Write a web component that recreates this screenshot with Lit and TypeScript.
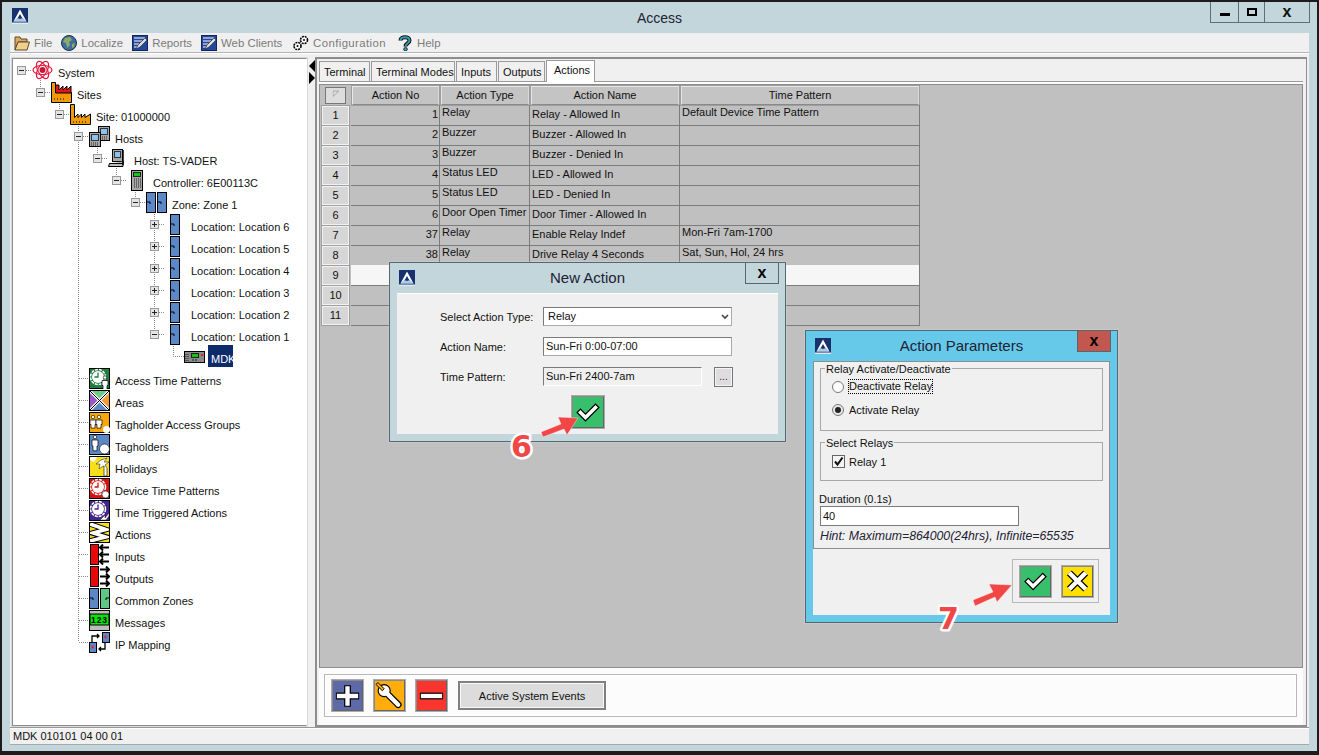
import { LitElement, html, css, svg } from "lit";
import { customElement } from "lit/decorators.js";

const logo = (s = 16) => html`<svg class="logo" width=${s} height=${s} viewBox="0 0 16 16"><rect width="16" height="16" fill="#17306e"/><path d="M8 1.500 14.500 13.500H1.500Z" fill="#fff"/><path d="M8 6 10.800 11H5.200Z" fill="#17306e"/><path d="M1.500 13.500 5.600 9.500 8 11 10.400 9.500 14.500 13.500H1.500Z" fill="#8fb6dc" opacity=".75"/><rect y="14.500" width="16" height="1.500" fill="#dfe8f4"/></svg>`;

const door = (x: number, w: number, fill: string, side: "l" | "r" = "l") => svg`<rect x=${x + .5} y=".5" width=${w} height="20" fill=${fill} stroke="#000"/><path d=${side === "l" ? `M${x + 1} 10h3v2` : `M${x + w} 10h-3v2`} fill="none" stroke="#000"/>`;
const computer = (x: number, y: number) => svg`<rect x=${x + .5} y=${y + .5} width="11" height="14" fill="#a8a8a8" stroke="#000"/><rect x=${x + 2.5} y=${y + 2.5} width="7" height="6" fill="#8ec1f0" stroke="#333"/><path d=${`M${x + 2} ${y + 11}h8M${x + 2} ${y + 13}h8`} stroke="#222" stroke-dasharray="1 1"/>`;
const clock = (bg: string, hand: string, extra: unknown = "") => svg`<rect x=".5" y=".5" width="20" height="20" fill=${bg} stroke="#000"/><circle cx="9" cy="9" r="7.500" fill="none" stroke="#fff" stroke-width="1.500" stroke-dasharray="3 1"/><circle cx="9" cy="9" r="6" fill="#fff"/><path d="M9 4.500V9H5.500" fill="none" stroke=${hand} stroke-width="1.300"/>${extra}`;
const person = (x: number, y: number, h = 1) => svg`<circle cx=${x} cy=${y} r="1.700" fill="#fff" stroke="#000" stroke-width=".6"/><path d=${`M${x - 3} ${y + 3}h6v${5 * h}h-1v${4 * h}h-4v${-4 * h}h-1Z`} fill="#fff" stroke="#000" stroke-width=".7"/>`;
const arrows = (dir: "l" | "r") => [3.5, 10.5, 17.5].map(y => dir === "l"
  ? svg`<path d=${`M11 ${y}h9M14 ${y - 3}l-3 3 3 3`} fill="none" stroke="#000" stroke-width="2"/>`
  : svg`<path d=${`M11 ${y}h9M17 ${y - 3}l3 3-3 3`} fill="none" stroke="#000" stroke-width="2"/>`);

const icons: Record<string, unknown> = {
  system: svg`<g fill="none" stroke="#e4173a" stroke-width="1.200"><ellipse cx="10.500" cy="10" rx="9.500" ry="4.500"/><ellipse cx="10.500" cy="10" rx="9.500" ry="4.500" transform="rotate(60 10.500 10)"/><ellipse cx="10.500" cy="10" rx="9.500" ry="4.500" transform="rotate(-60 10.500 10)"/></g><circle cx="10.500" cy="10" r="3" fill="#c4163c"/>`,
  sites: svg`<path d="M.5 20.500V.5H4.500V10.500H20.500V20.500Z" fill="#f09a0a" stroke="#000"/><path d="M4.500 3 4.500 11 20 11 20 4 16 8V4L12 8V4L8 8V3Z" fill="#e8141c" stroke="#000"/><path d="M3 17h11" stroke="#000" stroke-dasharray="1 2"/>`,
  site: svg`<path d="M.5 20.500V.5H4.500V13.500L8 10V13.500L11.500 10V13.500L15 10V13.500L20.500 10V20.500Z" fill="#f09a0a" stroke="#000"/><path d="M3 18h15" stroke="#000" stroke-dasharray="1 2"/>`,
  hosts: svg`${computer(9, 0)}${computer(0, 6)}`,
  host: svg`<rect x="4.500" y="1.500" width="10" height="12" fill="#a8a8a8" stroke="#000"/><rect x="6.500" y="3.500" width="6" height="6" fill="#8ec1f0" stroke="#333"/><path d="M1.500 15.500H15V13.500M.5 18.500H15V15.500H1.500Z" fill="#bbb" stroke="#000"/><path d="M15 2V17" stroke="#000" stroke-width="1.500"/>`,
  controller: svg`<rect x="4.500" y=".5" width="11" height="20" fill="#a8a8a8" stroke="#000"/><rect x="6.500" y="2.500" width="7" height="4" fill="#0ec80e" stroke="#222"/><path d="M7 9h7M7 11h7M7 13h7M7 15h7M7 17h7" stroke="#222" stroke-dasharray="1 1"/>`,
  zone: svg`${door(0, 9, "#5c88c8")}${door(11, 9, "#5c88c8")}`,
  location: svg`${door(5, 9, "#5c88c8")}`,
  mdk: svg`<rect x=".5" y="5.500" width="20" height="11" fill="#8a8a8a" stroke="#000"/><rect x="7.500" y="7.500" width="7" height="4" fill="#0ec80e" stroke="#222"/><path d="M2 8v7M4 8v7" stroke="#222" stroke-dasharray="1 1"/><path d="M8 14h6" stroke="#222" stroke-dasharray="2 1"/><rect x="17" y="8" width="2" height="2" fill="#e21c1c"/>`,
  atp: clock("#1f7d3e", "#1f7d3e", person(16, 9.5)),
  areas: svg`<rect x=".5" y=".5" width="20" height="20" fill="#fff" stroke="#000"/><path d="M3 1H18L10.500 8.500Z" fill="#6bcb88"/><path d="M1 3V18L8.500 10.500Z" fill="#9a5cc4"/><path d="M20 3V18L12.500 10.500Z" fill="#f29a3c"/><path d="M3 20H18L10.500 12.500Z" fill="#5c88c8"/><path d="M1 1 20 20M20 1 1 20" stroke="#000"/>`,
  groups: svg`<rect x=".5" y=".5" width="20" height="20" fill="#f7a70a" stroke="#000"/>${person(4, 5, .9)}${person(10, 5, .9)}<circle cx="17.500" cy="17.500" r="3.500" fill="#fff"/>`,
  holders: svg`<rect x=".5" y=".5" width="20" height="20" fill="#5c88c8" stroke="#000"/>${person(6, 3, 1.200)}<circle cx="15.500" cy="15" r="5" fill="#fff" stroke="#000" stroke-width=".6"/>`,
  holidays: svg`<rect x=".5" y=".5" width="20" height="20" fill="#f7e01a" stroke="#000"/><path d="M1 1H8L5 6 1 4Z" fill="#fff"/><path d="M12 4 18 2 15 6 20 6 16 9 18 12 14 10 10 13 11 8 7 8Z" fill="#fff" stroke="#333" stroke-width=".6"/><path d="M15 10v10h3V12" fill="#fff" stroke="#000" stroke-width=".6"/>`,
  device: clock("#d11414", "#d11414", svg`<circle cx="16.500" cy="16.500" r="3.500" fill="#fff" stroke="#000" stroke-width=".5"/>`),
  tta: clock("#43238c", "#43238c", svg`<path d="M11 20 16 15V18L20 13V16L17 20H11Z" fill="#fff" stroke="#000" stroke-width=".4"/>`),
  actions: svg`<rect x=".5" y=".5" width="20" height="20" fill="#f7e01a" stroke="#000"/><path d="M1 2 17 7.500 4 11 17 15 1 19" fill="none" stroke="#000" stroke-width="5.500"/><path d="M1 2 17 7.500 4 11 17 15 1 19" fill="none" stroke="#fff" stroke-width="3.500"/><rect x=".5" y=".5" width="20" height="20" fill="none" stroke="#000"/>`,
  inputs: svg`<rect x="1.500" y=".5" width="8" height="20" fill="#e80808" stroke="#000"/>${arrows("l")}`,
  outputs: svg`<rect x="1.500" y=".5" width="8" height="20" fill="#e80808" stroke="#000"/>${arrows("r")}`,
  common: svg`${door(0, 9, "#5c88c8")}${door(11, 9, "#5ec884", "r")}`,
  messages: svg`<rect x=".5" y=".5" width="20" height="20" fill="#bcbcbc" stroke="#000"/><rect x="1" y="4" width="19" height="11" fill="#0ee00e" stroke="#000"/><text x="10.500" y="12.800" text-anchor="middle" font-family="Liberation Sans, sans-serif" font-weight="700" font-size="8.500" letter-spacing="1">123</text>`,
  ipmap: svg`<rect x=".5" y="10.500" width="7" height="10" fill="#5c88c8" stroke="#000"/><rect x="2.500" y="13.500" width="2" height="3" fill="#e22"/><rect x="13.500" y=".5" width="7" height="10" fill="#5c88c8" stroke="#000"/><rect x="15.500" y="3.500" width="2" height="3" fill="#e22"/><path d="M3 10V4H10M8 2l2 2-2 2M16 11v6H10M12 15l-2 2 2 2" fill="none" stroke="#000" stroke-width="1.300"/>`,
};
const treeIcon = (n: string) => html`<svg class="ti" width="21" height="21" viewBox="0 0 21 21">${icons[n]}</svg>`;

type Node = { label: string; icon: string; level: number; toggle?: "-" | "+" | "" };
const tree: Node[] = [
  { label: "System", icon: "system", level: 0, toggle: "-" },
  { label: "Sites", icon: "sites", level: 1, toggle: "-" },
  { label: "Site: 01000000", icon: "site", level: 2, toggle: "-" },
  { label: "Hosts", icon: "hosts", level: 3, toggle: "-" },
  { label: "Host: TS-VADER", icon: "host", level: 4, toggle: "-" },
  { label: "Controller: 6E00113C", icon: "controller", level: 5, toggle: "-" },
  { label: "Zone: Zone 1", icon: "zone", level: 6, toggle: "-" },
  ...[6, 5, 4, 3, 2].map(n => ({ label: `Location: Location ${n}`, icon: "location", level: 7, toggle: "+" as const })),
  { label: "Location: Location 1", icon: "location", level: 7, toggle: "-" },
  { label: "MDK", icon: "mdk", level: 8, toggle: "" },
  ...([["Access Time Patterns", "atp"], ["Areas", "areas"], ["Tagholder Access Groups", "groups"], ["Tagholders", "holders"], ["Holidays", "holidays"], ["Device Time Patterns", "device"], ["Time Triggered Actions", "tta"], ["Actions", "actions"], ["Inputs", "inputs"], ["Outputs", "outputs"], ["Common Zones", "common"], ["Messages", "messages"], ["IP Mapping", "ipmap"]] as const)
    .map(([label, icon]) => ({ label, icon, level: 3, toggle: "" as const })),
];

const rows: [string, string, string, string, string][] = [
  ["1", "1", "Relay", "Relay - Allowed In", "Default Device Time Pattern"],
  ["2", "2", "Buzzer", "Buzzer - Allowed In", ""],
  ["3", "3", "Buzzer", "Buzzer - Denied In", ""],
  ["4", "4", "Status LED", "LED - Allowed In", ""],
  ["5", "5", "Status LED", "LED - Denied In", ""],
  ["6", "6", "Door Open Timer", "Door Timer - Allowed In", ""],
  ["7", "37", "Relay", "Enable Relay Indef", "Mon-Fri 7am-1700"],
  ["8", "38", "Relay", "Drive Relay 4 Seconds", "Sat, Sun, Hol, 24 hrs"],
  ["9", "", "", "", ""],
  ["10", "", "", "", ""],
  ["11", "", "", "", ""],
];

const check = html`<svg viewBox="0 0 30 30" width="30" height="30"><path d="M7.500 15.500 12.500 20.500 22.500 10.500" fill="none" stroke="#000" stroke-width="6" stroke-linecap="square"/><path d="M7.500 15.500 12.500 20.500 22.500 10.500" fill="none" stroke="#fff" stroke-width="3.500" stroke-linecap="square"/></svg>`;
const cross = html`<svg viewBox="0 0 30 30" width="30" height="30"><path d="M6.500 6.500 23.500 23.500M23.500 6.500 6.500 23.500" fill="none" stroke="#000" stroke-width="7"/><path d="M6.500 6.500 23.500 23.500M23.500 6.500 6.500 23.500" fill="none" stroke="#fff" stroke-width="4.500"/></svg>`;
const plus = html`<svg viewBox="0 0 30 30" width="30" height="30"><path d="M15 4V26M3 15H27" stroke="#000" stroke-width="7"/><path d="M15 5V25M4 15H26" stroke="#fff" stroke-width="4.500"/></svg>`;
const minus = html`<svg viewBox="0 0 30 30" width="30" height="30"><path d="M3 15H27" stroke="#000" stroke-width="7"/><path d="M4 15H26" stroke="#fff" stroke-width="4.500"/></svg>`;
const wrench = html`<svg viewBox="0 0 30 30" width="30" height="30"><circle cx="9.500" cy="9.500" r="6.800" fill="#000"/><path d="M11 11 24 24" stroke="#000" stroke-width="7" stroke-linecap="round"/><circle cx="9.500" cy="9.500" r="5.600" fill="#fff"/><path d="M11 11 24 24" stroke="#fff" stroke-width="4.500" stroke-linecap="round"/><path d="M3 1 9.500 7.500 7.500 9.500 1 3Z" fill="#ffad0d" stroke="#000"/></svg>`;

const notepad = html`<svg viewBox="0 0 16 16" width="16" height="16"><rect x=".5" y=".5" width="15" height="15" fill="#22479c" stroke="#10265c"/><path d="M2 3h11M2 6h8M2 9h5M2 12h3" stroke="#fff"/><path d="M4 14 6 10 13 3 15 5 8 12Z" fill="#ddd" stroke="#222" stroke-width=".6"/></svg>`;
const menu: [string, unknown][] = [
  ["File", html`<svg viewBox="0 0 16 16" width="16" height="16"><path d="M1 2h5l1 2h6v3H4l-3 8Z" fill="#d9a962" stroke="#5a4a2a"/><path d="M1 15 4 7H15.500L13 15Z" fill="#f3cf8e" stroke="#5a4a2a"/></svg>`],
  ["Localize", html`<svg viewBox="0 0 16 16" width="16" height="16"><circle cx="8" cy="8" r="7.500" fill="#3d6f9e" stroke="#222e44"/><path d="M4 3 9 2 11 5 8 7 9 10 6 13 5 8 2 7ZM11 9l3-1-1 4-2 1Z" fill="#8cab6a"/></svg>`],
  ["Reports", notepad],
  ["Web Clients", notepad],
  ["Configuration", html`<svg viewBox="0 0 16 16" width="16" height="16"><g fill="#fff" stroke="#000"><circle cx="4.500" cy="11" r="3.500" stroke-width="1.600" stroke-dasharray="2 .8"/><circle cx="11" cy="5" r="3.500" stroke-width="1.600" stroke-dasharray="2 .8"/></g><circle cx="4.500" cy="11" r="1"/><circle cx="11" cy="5" r="1"/></svg>`],
  ["Help", html`<svg viewBox="0 0 16 16" width="16" height="16"><path d="M3.500 5.500C3.500 1 12.500 1 12.500 5.500 12.500 8.500 8.500 8 8.500 11.500" fill="none" stroke="#111" stroke-width="4"/><path d="M3.500 5.500C3.500 1 12.500 1 12.500 5.500 12.500 8.500 8.500 8 8.500 11.500" fill="none" stroke="#3a9ab5" stroke-width="2"/><circle cx="8.500" cy="14.200" r="1.800" fill="#3a9ab5" stroke="#111" stroke-width=".8"/></svg>`],
];

@customElement("app-root")
export class AppRoot extends LitElement {
  static styles = css`
    :host { display: block; width: 1319px; height: 755px; position: relative; overflow: hidden; font: 11px "Liberation Sans", Arial, sans-serif; color: #111; }
    * { box-sizing: border-box; }
    .window { width: 1319px; height: 755px; background: #c3d6dc; border: solid #1c1c1c; border-width: 2px 2px 4px; padding: 0 8px 6px; display: flex; flex-direction: column; }
    .titlebar { height: 31px; display: grid; grid-template-columns: 1fr auto 1fr; align-items: start; flex: none; }
    .logo { display: block; }
    .titlebar .logo { margin: 6px 0 0 2px; }
    .title { font-size: 14px; line-height: 16px; padding-top: 8px; color: #223; }
    .controls { justify-self: end; display: flex; height: 21px; margin-right: -1px; border: 1px solid #5c7078; border-top: none; }
    .controls div { display: flex; align-items: center; justify-content: center; border-left: 1px solid #5c7078; font-weight: 700; }
    .controls div:first-child { width: 27px; border-left: none; }
    .controls div:nth-child(2) { width: 26px; }
    .controls div:nth-child(3) { width: 45px; }
    .dash { width: 10px; height: 3px; background: #000; margin-top: 4px; }
    .sq { width: 10px; height: 8px; border: 2px solid #000; }
    .x { font: 700 16px "Liberation Sans", sans-serif; line-height: 16px; }
    .body { flex: 1; min-height: 0; background: #f0f0f0; display: flex; flex-direction: column; }
    .menubar { height: 20px; flex: none; display: flex; align-items: center; gap: 9px; padding-left: 4px; border-bottom: 1px solid #b5b5b5; box-shadow: 0 1px 0 #fff; }
    .mi { display: flex; align-items: center; gap: 4px; color: #7b7b7b; font-size: 11.400px; }
    .mi svg { display: block; flex: none; }
    .mi:nth-child(4) span { min-width: 63px; }
    .mi:nth-child(5) span { min-width: 75px; letter-spacing: .4px; }
    .main { flex: 1; min-height: 0; display: flex; padding: 4px 0 0 1px; }
    .tree { width: 297px; flex: none; background: #fff; border: 2px solid; border-color: #8d8d8d #fff #8d8d8d #8d8d8d; outline: 1px solid #d8d8d8; outline-offset: -1px; position: relative; }
    .guides { position: absolute; left: -13px; top: -59px; pointer-events: none; }
    .tr { height: 22px; display: flex; align-items: flex-start; position: relative; white-space: nowrap; }
    .toggle { width: 9px; height: 9px; margin-top: 7px; border: 1px solid #999; background: #e4e4e4; display: block; flex: none; position: relative; }
    .toggle::before { content: ""; position: absolute; left: 1px; right: 1px; top: 3px; height: 1px; background: #222; }
    .toggle.plus::after { content: ""; position: absolute; top: 1px; bottom: 1px; left: 3px; width: 1px; background: #222; }
    .tgap { width: 6px; flex: none; }
    .tslot { width: 15px; flex: none; }
    .ti { display: block; flex: none; margin-top: 1px; }
    .tl { margin: 8px 0 0 5px; line-height: 13px; }
    .tl.sel { background: #0d2a6b; color: #fff; margin: 0 0 0 3px; height: 22px; padding: 8px 0 0 3px; width: 25px; }
    .split { width: 6px; flex: none; display: flex; flex-direction: column; padding-top: 3px; margin-left: 1px; }
    .tri { width: 0; height: 0; border-top: 6px solid transparent; border-bottom: 6px solid transparent; }
    .tri.l { border-right: 6px solid #000; }
    .tri.r { border-left: 6px solid #000; }
    .panel { width: 992px; flex: none; border: 2px solid #8d8d8d; border-right-width: 1px; background: #f0f0f0; display: flex; flex-direction: column; padding: 1px 3px 0 2px; }
    .tabs { height: 22px; flex: none; display: flex; align-items: flex-end; gap: 1px; border-bottom: 1px solid #999; }
    .tab { height: 20px; padding: 0 4px; line-height: 20px; border: 1px solid #9a9a9a; border-bottom: none; background: #f0f0f0; white-space: nowrap; }
    .tab:nth-child(1) { width: 51px; } .tab:nth-child(2) { width: 84px; } .tab:nth-child(3) { width: 41px; } .tab:nth-child(4) { width: 47px; }
    .tab.on { height: 22px; width: 49px; background: #fff; margin-bottom: -1px; line-height: 19px; z-index: 1; padding-left: 7px; }
    .page { flex: 1; min-height: 0; background: #fcfcfc; display: flex; flex-direction: column; padding-top: 2px; }
    .grid { flex: 1; min-height: 0; background: #c0c0c0; border: 1px solid #8d8d8d; padding-left: 1px; }
    .gr { display: grid; grid-template-columns: 30px 89px 90px 150px 240px; height: 20px; width: 599px; }
    .gh { background: #c4c4c4; border: 2px solid; border-color: #e8e8e8 #d8d8d8 #8a8a8a #e8e8e8; text-align: center; line-height: 17px; outline: 1px solid #9e9e9e; outline-offset: -1px; }
    .rh { background: #d6d6d6; border: 2px solid #f2f2f2; outline: 1px solid #9e9e9e; outline-offset: -1px; text-align: center; line-height: 17px; margin-right: 1px; }
    .corner { margin-right: 1px; padding: 2px 4px; }
    .corner div { height: 100%; border: 1px solid #777; background: #ddd; color: #888; font-size: 8px; line-height: 11px; text-align: center; }
    .c { border-right: 1px solid #7c7c7c; border-bottom: 1px solid #7c7c7c; padding: 0 1px 0 2px; white-space: nowrap; overflow: hidden; }
    .c.no { text-align: right; line-height: 18px; padding-right: 1px; }
    .c.t { line-height: 14px; }
    .c.n { line-height: 18px; }
    .gr.white .c { background: #f6f6f6; }
    .actions { height: 57px; flex: none; padding: 6px 6px 8px 5px; }
    .agroup { height: 43px; border: 1px solid #b8b8b8; display: flex; align-items: center; padding-left: 7px; gap: 11px; box-shadow: inset 0 0 0 1px #fff; }
    .ib { width: 31px; height: 31px; border: 1px solid; border-color: #888 #666 #666 #888; outline: 1px solid #aaa; display: flex; align-items: center; justify-content: center; padding: 0; flex: none; }
    .ib.add { background: #5e69a8; } .ib.tool { background: #ffad0d; } .ib.del { background: #f8362d; } .ib.ok { background: #38bf6c; } .ib.no { background: #ffe000; }
    .evt { width: 148px; height: 29px; border: 2px solid #808080; background: #dcdcdc; box-shadow: inset 0 0 0 1px #f8f8f8; display: flex; align-items: center; justify-content: center; }
    .status { height: 18px; flex: none; border-top: 1px solid #999; border-bottom: 1px solid #a8a8a8; box-shadow: inset 0 1px 0 #fff; padding-left: 3px; line-height: 16px; }

    .dlg { position: absolute; border: 1px solid #56686f; box-shadow: 0 0 0 1px rgba(255,255,255,.15); display: flex; flex-direction: column; padding: 0 7px 7px; }
    .new { left: 389px; top: 262px; width: 397px; height: 180px; background: #c3d6dc; }
    .par { left: 805px; top: 330px; width: 313px; height: 293px; background: #67c9ea; }
    .dt { height: 30px; flex: none; position: relative; display: flex; align-items: center; justify-content: center; font-size: 15px; color: #223; padding-bottom: 1px; }
    .dt .logo { position: absolute; left: 2px; top: 7px; }
    .dx { position: absolute; top: 0; right: -1px; width: 34px; height: 21px; border: 1px solid #56686f; border-top: none; display: flex; align-items: center; justify-content: center; font: 700 16px "Liberation Sans", sans-serif; color: #000; line-height: 16px; }
    .par .dx { background: #c1574f; }
    .dc { flex: 1; background: #f0f0f0; min-height: 0; }
    .form { display: grid; grid-template-columns: 103px 159px 12px 19px; grid-auto-rows: 19px; row-gap: 11px; padding: 14px 0 0 43px; align-items: center; box-shadow: inset 0 1px 0 #fff; height: 100%; }
    .fld { height: 19px; border: 1px solid #7a7a7a; background: #fff; padding: 0 2px; line-height: 17px; border-right-color: #aaa; border-bottom-color: #aaa; white-space: nowrap; display: flex; justify-content: space-between; align-items: center; }
    .fld.wide { grid-column: 2 / 5; width: 189px; }
    .fld.sel { padding-left: 4px; }
    .fld.ro { background: #f0f0f0; border-color: #7a7a7a #fff #fff #7a7a7a; }
    .dots { grid-column: 4; width: 19px; height: 20px; background: #ddd; border: 1px solid #777; box-shadow: inset 0 0 0 1px #f4f4f4; color: #606; text-align: center; line-height: 18px; font-size: 10px; }
    .okrow { grid-column: 1 / 5; align-self: start; margin: -1px 0 0 132px; height: 32px; }
    .okrow .ib { width: 32px; height: 32px; }
    .box { height: 188px; border: 1px solid #8d8d8d; padding: 6px; flex: none; position: relative; }
    .fs { border: 1px solid #a8a8a8; position: relative; }
    .fs.a { height: 63px; padding: 6px 0 0 11px; margin-bottom: 11px; }
    .fs.b { height: 39px; padding: 12px 0 0 11px; margin-bottom: 11px; }
    .leg { position: absolute; left: 4px; top: -6px; background: #f0f0f0; padding: 0 1px; line-height: 13px; }
    .opt { height: 23px; display: flex; align-items: center; gap: 5px; }
    .opt.cbr { height: 13px; gap: 4px; }
    .rad { width: 12px; height: 12px; border-radius: 50%; border: 1px solid #777; background: #fff; flex: none; display: flex; align-items: center; justify-content: center; }
    .rad.on::after { content: ""; width: 6px; height: 6px; border-radius: 50%; background: #222; }
    .rad.on { background: #e8e8e8; }
    .focus { outline: 1px dotted #000; line-height: 13px; }
    .cb { width: 13px; height: 13px; border: 1px solid #666; background: #f4f4f4; flex: none; display: flex; }
    .dur { line-height: 14px; margin: 0 0 0 -1px; }
    .durin { width: 199px; height: 20px; border: 1px solid #7a7a7a; background: #fff; line-height: 18px; padding: 0 2px; margin: 0 0 3px 0; }
    .hint { font: italic 12.300px "Liberation Sans", sans-serif; line-height: 14px; white-space: nowrap; color: #223; }
    .pb { display: flex; justify-content: flex-end; padding: 10px 11px 0 0; }
    .pbg { width: 87px; height: 44px; border: 1px solid #b8b8b8; display: flex; align-items: center; gap: 11px; padding-left: 7px; }
    .marks { position: absolute; left: 0; top: 0; pointer-events: none; }
    .marks text { font: 700 30px "DejaVu Sans", sans-serif; fill: #f04848; stroke: #fff; stroke-width: 5px; paint-order: stroke; stroke-linejoin: round; }
  `;

  private guides() {
    const d: string[] = [];
    [0, 1, 2, 3, 4, 5, 6].forEach(l => {
      const x = 40 + l * 19;
      const y = 80 + l * 22;
      const yEnd = l === 2 ? 642 : l === 6 ? 335 : y + 11;
      d.push(`M${x}.5 ${y}V${yEnd}`);
    });
    tree.forEach((n, i) => {
      const y = 70 + i * 22;
      if (n.toggle) d.push(`M${26 + n.level * 19} ${y}.5h5`);
      else if (n.level === 3) d.push(`M79 ${y}.5h9`);
    });
    d.push("M173.500 346V356.500H184");
    return html`<svg class="guides" width="320" height="670"><path d=${d.join("")} fill="none" stroke="#8a8a8a" stroke-dasharray="1 1"/></svg>`;
  }

  render() {
    return html`
      <div class="window">
        <div class="titlebar">
          <div>${logo()}</div>
          <div class="title">Access</div>
          <div class="controls"><div><span class="dash"></span></div><div><span class="sq"></span></div><div><span class="x">x</span></div></div>
        </div>
        <div class="body">
          <div class="menubar">${menu.map(([t, i]) => html`<div class="mi">${i}<span>${t}</span></div>`)}</div>
          <div class="main">
            <div class="tree">
              ${this.guides()}
              ${tree.map(n => html`<div class="tr" style="padding-left:${4 + n.level * 19}px">
                ${n.toggle ? html`<span class="toggle ${n.toggle === "+" ? "plus" : ""}"></span><span class="tgap"></span>` : html`<span class="tslot"></span>`}
                ${treeIcon(n.icon)}
                <span class="tl ${n.label === "MDK" ? "sel" : ""}">${n.label}</span>
              </div>`)}
            </div>
            <div class="split"><span class="tri l"></span><span class="tri r"></span></div>
            <div class="panel">
              <div class="tabs">
                ${["Terminal", "Terminal Modes", "Inputs", "Outputs"].map(t => html`<div class="tab">${t}</div>`)}
                <div class="tab on">Actions</div>
              </div>
              <div class="page">
                <div class="grid">
                  <div class="gr">
                    <div class="corner"><div>◸</div></div>
                    ${["Action No", "Action Type", "Action Name", "Time Pattern"].map(h => html`<div class="gh">${h}</div>`)}
                  </div>
                  ${rows.map((r, i) => html`<div class="gr ${i === 8 ? "white" : ""}">
                    <div class="rh">${r[0]}</div>
                    <div class="c no">${r[1]}</div>
                    <div class="c t">${r[2]}</div>
                    <div class="c n">${r[3]}</div>
                    <div class="c t">${r[4]}</div>
                  </div>`)}
                </div>
                <div class="actions">
                  <div class="agroup">
                    <div class="ib add">${plus}</div>
                    <div class="ib tool">${wrench}</div>
                    <div class="ib del">${minus}</div>
                    <div class="evt">Active System Events</div>
                  </div>
                </div>
              </div>
            </div>
          </div>
          <div class="status">MDK 010101 04 00 01</div>
        </div>
      </div>

      <div class="dlg new">
        <div class="dt">${logo()}<span>New Action</span><span class="dx">x</span></div>
        <div class="dc">
          <div class="form">
            <span>Select Action Type:</span>
            <div class="fld sel wide"><span>Relay</span><svg width="8" height="6" viewBox="0 0 8 6"><path d="M1 1 4 4 7 1" fill="none" stroke="#444" stroke-width="1.600"/></svg></div>
            <span>Action Name:</span>
            <div class="fld wide">Sun-Fri 0:00-07:00</div>
            <span>Time Pattern:</span>
            <div class="fld ro">Sun-Fri 2400-7am</div>
            <div class="dots">...</div>
            <div class="okrow"><div class="ib ok">${check}</div></div>
          </div>
        </div>
      </div>

      <div class="dlg par">
        <div class="dt">${logo()}<span>Action Parameters</span><span class="dx">x</span></div>
        <div class="dc">
          <div class="box">
            <div class="fs a">
              <span class="leg">Relay Activate/Deactivate</span>
              <div class="opt"><span class="rad"></span><span class="focus">Deactivate Relay</span></div>
              <div class="opt"><span class="rad on"></span><span>Activate Relay</span></div>
            </div>
            <div class="fs b">
              <span class="leg">Select Relays</span>
              <div class="opt cbr"><span class="cb"><svg width="11" height="11" viewBox="0 0 11 11"><path d="M2 5.500 4.500 8.500 9.500 1.500" fill="none" stroke="#111" stroke-width="2"/></svg></span><span>Relay 1</span></div>
            </div>
            <div class="dur">Duration (0.1s)</div>
            <div class="durin">40</div>
            <div class="hint">Hint: Maximum=864000(24hrs), Infinite=65535</div>
          </div>
          <div class="pb"><div class="pbg"><div class="ib ok">${check}</div><div class="ib no">${cross}</div></div></div>
        </div>
      </div>

      <svg class="marks" width="1319" height="755">
        <g fill="#f24545" stroke="#fff" stroke-width=".4">
          <polygon points="541,432 561,424 558,417 578,418 567,435 564,429 543,437"/>
          <polygon points="973,600 993,592 989,584 1012,585 997,602 995,597 975,606"/>
        </g>
        <text x="511" y="457">6</text>
        <text x="938" y="629">7</text>
      </svg>
    `;
  }
}
